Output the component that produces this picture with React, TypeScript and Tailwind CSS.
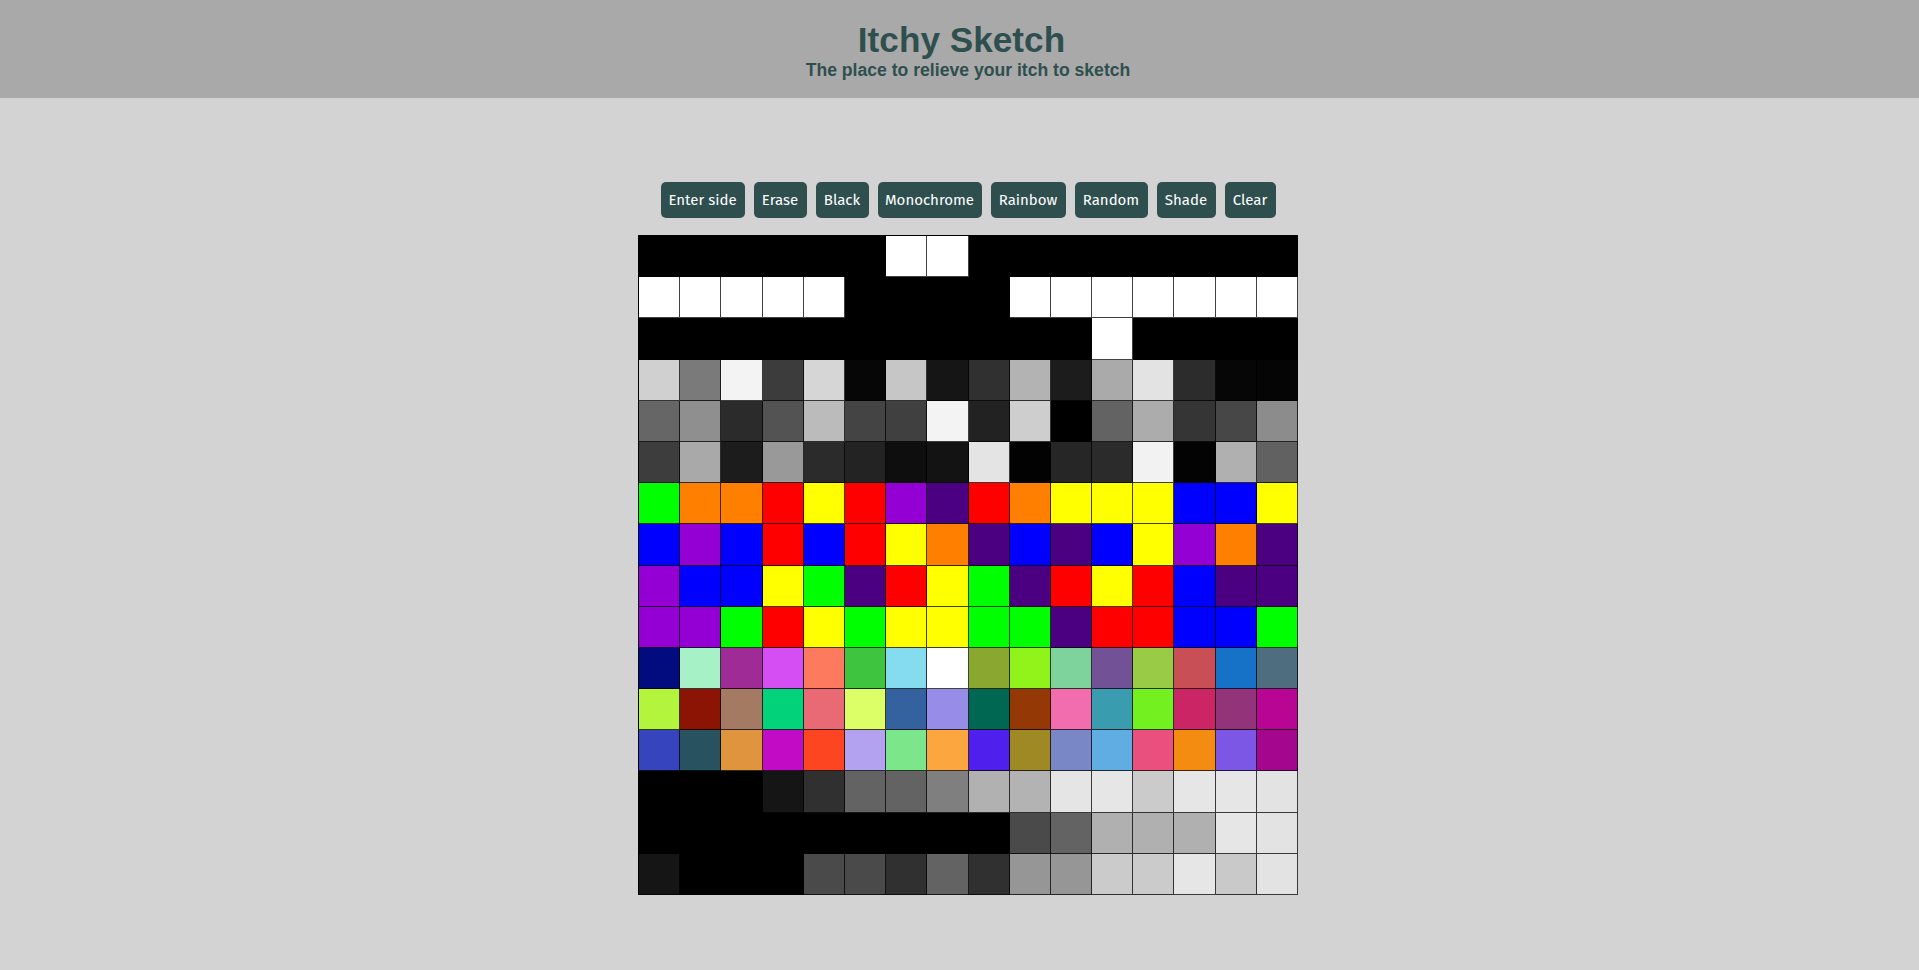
import React from "react";

const K = "#000000";
const W = "#ffffff";
const G = "#00ff00";
const O = "#ff8000";
const R = "#ff0000";
const Y = "#ffff00";
const V = "#9400d3";
const I = "#4b0082";
const B = "#0000ff";

const h = (s: string) => s.split(" ").map((c) => "#" + c);

const rows: string[][] = [
  [K, K, K, K, K, K, W, W, K, K, K, K, K, K, K, K],
  [W, W, W, W, W, K, K, K, K, W, W, W, W, W, W, W],
  [K, K, K, K, K, K, K, K, K, K, K, W, K, K, K, K],
  h("d0d0d0 7a7a7a f3f3f3 3c3c3c d6d6d6 060606 c6c6c6 151515 303030 b3b3b3 1c1c1c aaaaaa e3e3e3 2c2c2c 060606 050505"),
  h("666666 8f8f8f 2b2b2b 535353 bbbbbb 444444 404040 f3f3f3 222222 cecece 000000 636363 acacac 353535 474747 8c8c8c"),
  h("3d3d3d a9a9a9 1c1c1c 999999 2b2b2b 232323 0e0e0e 131313 e4e4e4 020202 262626 2b2b2b f2f2f2 030303 b0b0b0 616161"),
  [G, O, O, R, Y, R, V, I, R, O, Y, Y, Y, B, B, Y],
  [B, V, B, R, B, R, Y, O, I, B, I, B, Y, V, O, I],
  [V, B, B, Y, G, I, R, Y, G, I, R, Y, R, B, I, I],
  [V, V, G, R, Y, G, Y, Y, G, G, I, R, R, B, B, G],
  h("020c7e a6f2c6 9e2b96 d44ef3 fe7a5e 3ec43e 86dcef ffffff 8aa82f 90f41a 7ed39d 735196 99cb46 c84f56 1572c6 4e6e80"),
  h("b3f43d 8b1405 a47a62 02d37b e96a75 dcfe67 34629e 988ce9 006753 943906 f16dae 3a9caf 73f01f cc2566 933379 b80593"),
  h("3644bd 28525f e0943e c20bc5 fe4521 b2a2ef 7be68a fba63e 4e1fed 9e8924 7a87c6 5fade2 ea507e f38c10 7c57e5 a5068e"),
  h("000000 000000 000000 151515 303030 636363 636363 7f7f7f b1b1b1 b3b3b3 e5e5e5 e6e6e6 cbcbcb e6e6e6 e6e6e6 e3e3e3"),
  h("000000 000000 000000 000000 000000 000000 000000 000000 000000 4a4a4a 636363 b0b0b0 b0b0b0 b0b0b0 e6e6e6 e3e3e3"),
  h("151515 000000 000000 000000 4a4a4a 4a4a4a 303030 636363 303030 969696 969696 cbcbcb cbcbcb e6e6e6 c9c9c9 e3e3e3"),
];

const buttons: { label: string; w: string }[] = [
  { label: "Enter side", w: "w-[84px]" },
  { label: "Erase", w: "w-[53px]" },
  { label: "Black", w: "w-[53px]" },
  { label: "Monochrome", w: "w-[104px]" },
  { label: "Rainbow", w: "w-[75px]" },
  { label: "Random", w: "w-[73px]" },
  { label: "Shade", w: "w-[59px]" },
  { label: "Clear", w: "w-[51px]" },
];

export default function App() {
  return (
    <div className="min-h-screen bg-[#d3d3d3]">
      <header className="bg-[#a9a9a9] h-[98px] pt-[22px] flex flex-col items-center text-[#2f4f4f] font-['Liberation_Sans',Arial,sans-serif] font-bold">
        <h1 className="text-[35.2px] leading-[36px] m-0 pl-[4px]">Itchy Sketch</h1>
        <p className="text-[17.6px] leading-[20px] mt-[2px] pl-[17px]">The place to relieve your itch to sketch</p>
      </header>
      <main className="flex flex-col items-center pl-[17px] pt-[84px]">
        <div className="flex gap-[9px] h-[36px]">
          {buttons.map((b) => (
            <button
              key={b.label}
              className={`${b.w} h-[36px] rounded-[5px] bg-[#2f4f4f] text-white text-[15px] font-normal font-['Fira_Sans',Lato,'Open_Sans',sans-serif] flex items-center justify-center whitespace-nowrap`}
            >
              {b.label}
            </button>
          ))}
        </div>
        <div className="mt-[17px] w-[660px] h-[660px] grid grid-cols-16 grid-rows-16 border-l border-t border-black">
          {rows.flatMap((row, r) =>
            row.map((c, i) => (
              <div
                key={`${r}-${i}`}
                className="border-r border-b border-black/75"
                style={{ backgroundColor: c }}
              />
            ))
          )}
        </div>
      </main>
    </div>
  );
}
